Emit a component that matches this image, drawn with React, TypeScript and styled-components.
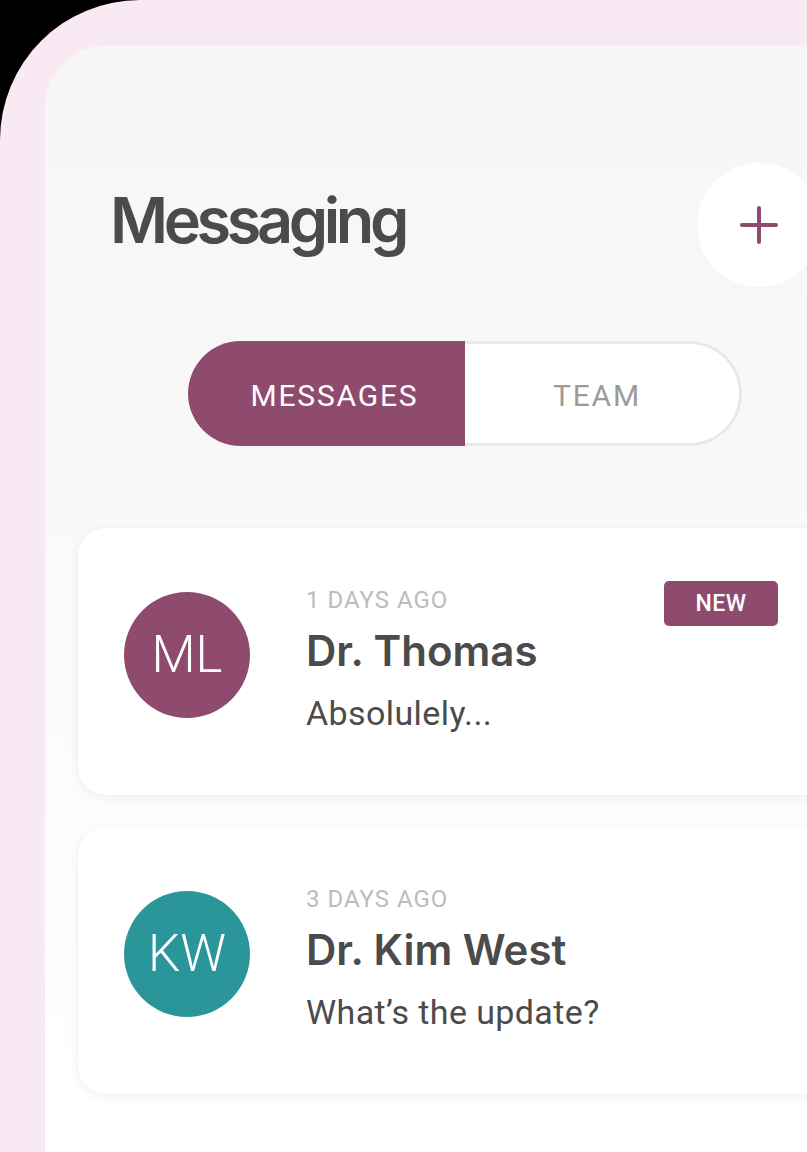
import React from "react";
import styled, { createGlobalStyle } from "styled-components";

const GlobalStyle = createGlobalStyle`
  html, body {
    margin: 0;
    padding: 0;
    background: #000;
    overflow: hidden;
  }
  * { box-sizing: border-box; }
`;

const Frame = styled.div`
  width: 1000px;
  min-height: 1152px;
  background: #f8e9f2;
  border-top-left-radius: 140px;
  padding: 45px 0 0 45px;
`;

const Screen = styled.div`
  width: 840px;
  min-height: 1107px;
  border-top-left-radius: 62px;
  background: linear-gradient(180deg, #f6f6f6 0px, #f8f8f8 400px, #fdfdfd 800px, #ffffff 1100px);
  display: flex;
  flex-direction: column;
  padding-top: 118px;
`;

const Header = styled.header`
  display: flex;
  align-items: center;
  justify-content: space-between;
  padding: 0 64px 0 65px;
`;

const Title = styled.h1`
  margin: 0;
  font-family: Inter, "Noto Sans", sans-serif;
  font-weight: 600;
  font-size: 63px;
  letter-spacing: -4.4px;
  color: #4b4b4b;
  line-height: 1;
  padding-bottom: 10px;
`;

const AddButton = styled.button`
  width: 124px;
  height: 124px;
  border-radius: 50%;
  border: none;
  background: #ffffff;
  display: flex;
  align-items: center;
  justify-content: center;
  padding: 0;
  cursor: pointer;
`;

const Toggle = styled.div`
  align-self: center;
  margin-top: 54px;
  width: 554px;
  height: 105px;
  border-radius: 53px;
  display: flex;
  overflow: hidden;
`;

const ToggleTab = styled.button<{ $active?: boolean }>`
  flex: 0 0 50%;
  border: ${(p) => (p.$active ? "none" : "3px solid #e8e8e8")};
  border-left: none;
  border-radius: ${(p) => (p.$active ? "0" : "0 53px 53px 0")};
  background: ${(p) => (p.$active ? "#8f4b6d" : "#ffffff")};
  color: ${(p) => (p.$active ? "#ffffff" : "#9b9b9b")};
  font-family: Roboto, "Liberation Sans", sans-serif;
  font-weight: 400;
  font-size: 30px;
  letter-spacing: 1.8px;
  display: flex;
  align-items: center;
  justify-content: center;
  padding: ${(p) => (p.$active ? "4px 0 0 16px" : "4px 10px 0 0")};
`;

const CardList = styled.div`
  display: flex;
  flex-direction: column;
  gap: 32px;
  margin-top: 82px;
  padding: 0 33px;
`;

const Card = styled.div`
  height: 267px;
  background: #ffffff;
  border-radius: 28px;
  box-shadow: 0 2px 12px rgba(0, 0, 0, 0.06), 0 0 2px rgba(0, 0, 0, 0.04);
  display: flex;
  align-items: center;
  padding: 0 74px 14px 46px;
`;

const Avatar = styled.div<{ $color: string }>`
  width: 126px;
  height: 126px;
  flex: none;
  border-radius: 50%;
  background: ${(p) => p.$color};
  color: #ffffff;
  font-family: Roboto, "Liberation Sans", sans-serif;
  font-weight: 300;
  font-size: 51px;
  display: flex;
  align-items: center;
  justify-content: center;
`;

const Body = styled.div`
  flex: 1;
  margin-left: 56px;
  padding-top: 10px;
  display: flex;
  flex-direction: column;
`;

const Time = styled.div`
  font-family: Roboto, "Liberation Sans", sans-serif;
  font-size: 24px;
  line-height: 30px;
  color: #bcbcbc;
  letter-spacing: 1px;
`;

const Name = styled.div`
  font-family: Inter, "Noto Sans", sans-serif;
  font-weight: 600;
  font-size: 42px;
  line-height: 52px;
  letter-spacing: 0;
  color: #4b4b4b;
  margin-top: 10px;
`;

const Preview = styled.div`
  font-family: Roboto, "Liberation Sans", sans-serif;
  font-size: 34px;
  line-height: 44px;
  letter-spacing: 0.4px;
  color: #4b4b4b;
  margin-top: 14px;
`;

const Badge = styled.span`
  align-self: flex-start;
  margin-top: 53px;
  width: 114px;
  height: 45px;
  border-radius: 5px;
  background: #8f4b6d;
  color: #ffffff;
  font-family: Roboto, "Liberation Sans", sans-serif;
  font-weight: 500;
  font-size: 23px;
  letter-spacing: 0.5px;
  display: flex;
  align-items: center;
  justify-content: center;
`;

type Msg = {
  initials: string;
  color: string;
  time: string;
  name: string;
  preview: string;
  isNew?: boolean;
};

const messages: Msg[] = [
  { initials: "ML", color: "#8f4b6d", time: "1 DAYS AGO", name: "Dr. Thomas", preview: "Absolulely...", isNew: true },
  { initials: "KW", color: "#2a969a", time: "3 DAYS AGO", name: "Dr. Kim West", preview: "What’s the update?" },
];

export default function App() {
  return (
    <>
      <GlobalStyle />
      <Frame>
        <Screen>
          <Header>
            <Title>Messaging</Title>
            <AddButton aria-label="New message">
              <svg width="38" height="38" viewBox="0 0 38 38">
                <path d="M19 2v34M2 19h34" stroke="#8f4b6d" strokeWidth="4" strokeLinecap="round" />
              </svg>
            </AddButton>
          </Header>
          <Toggle>
            <ToggleTab $active>MESSAGES</ToggleTab>
            <ToggleTab>TEAM</ToggleTab>
          </Toggle>
          <CardList>
            {messages.map((m) => (
              <Card key={m.name}>
                <Avatar $color={m.color}>{m.initials}</Avatar>
                <Body>
                  <Time>{m.time}</Time>
                  <Name>{m.name}</Name>
                  <Preview>{m.preview}</Preview>
                </Body>
                {m.isNew && <Badge>NEW</Badge>}
              </Card>
            ))}
          </CardList>
        </Screen>
      </Frame>
    </>
  );
}
